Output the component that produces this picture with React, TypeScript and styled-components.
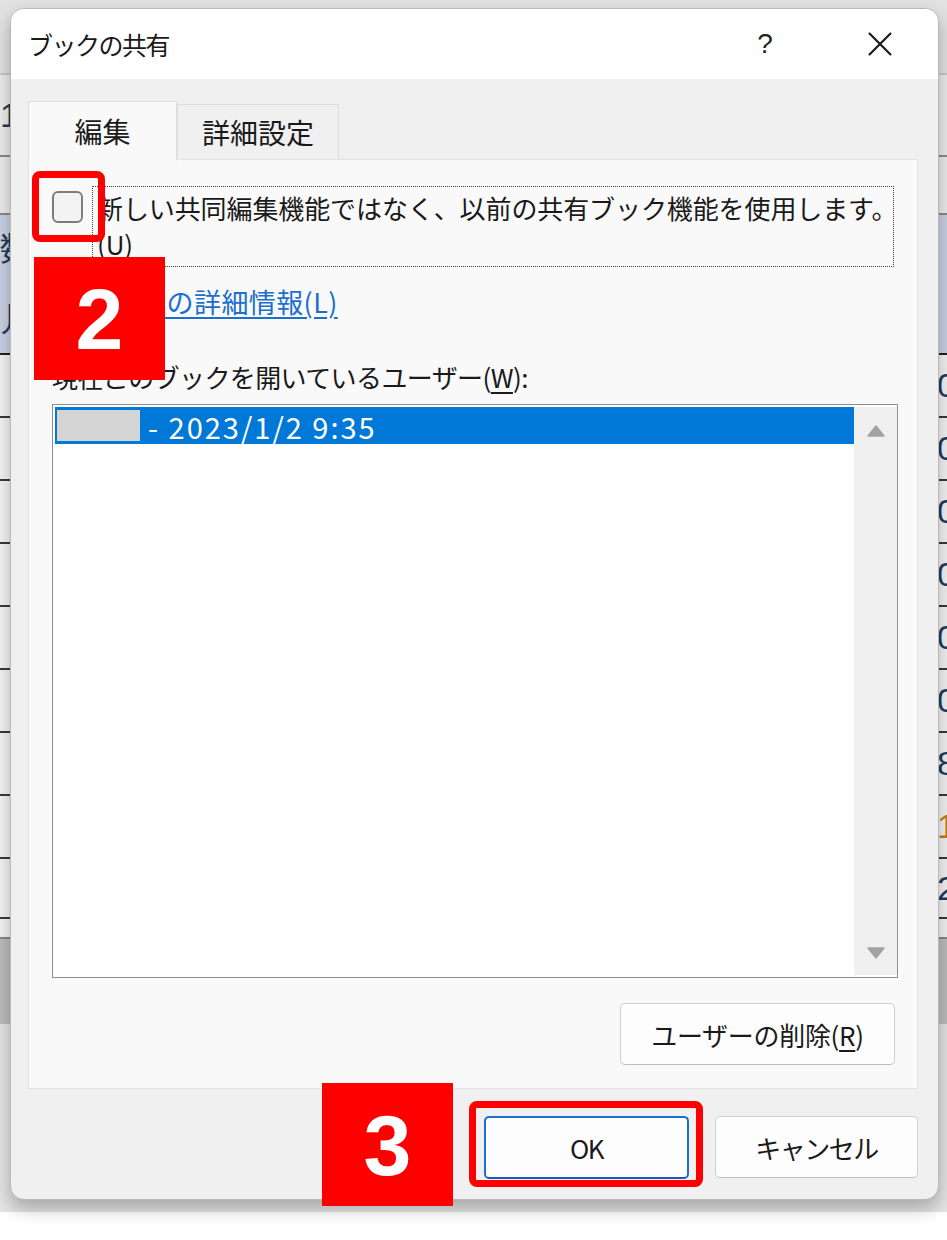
import React from "react";
import styled, { createGlobalStyle } from "styled-components";

const GlobalStyle = createGlobalStyle`
  html, body { margin: 0; padding: 0; background: #ffffff; }
  body { font-family: "Noto Sans CJK JP", "Noto Sans", sans-serif; color: #1a1a1a; }
`;

const UI = `"Noto Sans CJK JP", "Noto Sans", sans-serif`;

const Page = styled.div`
  position: relative;
  width: 947px;
  height: 1240px;
  overflow: hidden;
  background: #ffffff;
`;

/* ---------- spreadsheet behind the dialog ---------- */
const Sheet = styled.div`
  display: flex;
  flex-direction: column;
  width: 947px;
  height: 1212px;
  background: #e4e4e4;
`;

const SheetRow = styled.div<{ $h: number; $bg?: string; $line?: string }>`
  display: flex;
  justify-content: space-between;
  align-items: center;
  height: ${(p) => p.$h}px;
  flex: none;
  box-sizing: border-box;
  background: ${(p) => p.$bg || "#f4f4f4"};
  border-bottom: 2px solid ${(p) => p.$line || "#3a3a3a"};
`;

const EdgeCell = styled.div<{ $c?: string }>`
  width: 10px;
  overflow: hidden;
  white-space: nowrap;
  font-family: "Liberation Sans", sans-serif;
  font-size: 34px;
  color: ${(p) => p.$c || "#1f3a5a"};
`;

const RightCell = styled(EdgeCell)`
  text-align: left;
`;

/* ---------- dialog ---------- */
const Dialog = styled.div`
  position: absolute;
  left: 10px;
  top: 8px;
  width: 929px;
  height: 1192px;
  display: flex;
  flex-direction: column;
  background: #f0f0f0;
  border: 1px solid #b9b9b9;
  border-radius: 14px;
  box-sizing: border-box;
  overflow: hidden;
  box-shadow: 0 8px 18px rgba(0, 0, 0, 0.28);
`;

const TitleBar = styled.div`
  display: flex;
  align-items: center;
  height: 70px;
  flex: none;
  padding-left: 17px;
  background: #ffffff;
`;

const Title = styled.div`
  flex: 1;
  font-family: ${UI};
  font-size: 25px;
  letter-spacing: -1.5px;
  color: #1a1a1a;
`;

const Help = styled.div`
  width: 30px;
  margin-right: 86px;
  font-family: "Liberation Sans", sans-serif;
  font-size: 28px;
  color: #222;
  text-align: center;
`;

const CloseBtn = styled.div`
  width: 28px;
  height: 28px;
  margin-right: 44px;
  display: flex;
  align-items: center;
  justify-content: center;
`;

const Body = styled.div`
  flex: 1;
  display: flex;
  flex-direction: column;
  padding: 22px 20px 0 17px;
`;

const TabRow = styled.div`
  display: flex;
  align-items: flex-end;
  height: 58px;
`;

const Tab = styled.div<{ $active?: boolean }>`
  position: relative;
  z-index: ${(p) => (p.$active ? 1 : 0)};
  box-sizing: border-box;
  display: flex;
  align-items: center;
  justify-content: center;
  width: ${(p) => (p.$active ? 149 : 162)}px;
  height: ${(p) => (p.$active ? 60 : 55)}px;
  margin-bottom: ${(p) => (p.$active ? -2 : 0)}px;
  padding-bottom: ${(p) => (p.$active ? 1 : 0)}px;
  background: ${(p) => (p.$active ? "#f9f9f9" : "#f0f0f0")};
  border: 1px solid #dedede;
  border-bottom: none;
  font-family: ${UI};
  font-size: 28px;
  color: #1a1a1a;
`;

const Panel = styled.div`
  box-sizing: border-box;
  display: flex;
  flex-direction: column;
  height: 930px;
  padding: 0 19px 0 23px;
  background: #f9f9f9;
  border: 1px solid #e2e2e2;
`;

const CheckRow = styled.div`
  display: flex;
  align-items: flex-start;
  margin-top: 26px;
  gap: 9px;
`;

const CheckBox = styled.div`
  box-sizing: border-box;
  width: 31px;
  height: 32px;
  margin-top: 5px;
  flex: none;
  border: 2px solid #7d7d7d;
  border-radius: 6px;
  background: #f3f3f3;
`;

const FocusRect = styled.div`
  flex: 1;
  min-width: 0;
  margin-right: 4px;
  box-sizing: border-box;
  height: 81px;
  padding: 3px 4px 4px 4px;
  border: 1px dotted #444;
  font-family: ${UI};
  font-size: 26px;
  line-height: 36px;
  letter-spacing: -0.1px;
  color: #1a1a1a;
`;

const Line = styled.div`
  white-space: nowrap;
`;

const Link = styled.a`
  align-self: flex-start;
  margin-top: 17px;
  margin-left: 5px;
  font-family: ${UI};
  font-size: 27px;
  line-height: 36px;
  letter-spacing: 0.4px;
  color: #1a6fcf;
  text-decoration: underline;
  text-underline-offset: 4px;
`;

const Label = styled.div`
  margin-top: 39px;
  font-family: ${UI};
  font-size: 26px;
  line-height: 36px;
  letter-spacing: -0.6px;
  color: #1a1a1a;
`;

const Under = styled.span`
  text-decoration: underline;
  text-underline-offset: 4px;
`;

const ListBox = styled.div`
  box-sizing: border-box;
  display: flex;
  height: 574px;
  margin-top: 9px;
  padding: 2px 0 2px 2px;
  background: #ffffff;
  border: 1px solid #8e8e8e;
`;

const ListItems = styled.div`
  flex: 1;
  display: flex;
  flex-direction: column;
`;

const ListItem = styled.div<{ $selected?: boolean }>`
  display: flex;
  align-items: center;
  gap: 8px;
  height: 37px;
  padding-left: 2px;
  background: ${(p) => (p.$selected ? "#0078d7" : "transparent")};
  color: ${(p) => (p.$selected ? "#ffffff" : "#1a1a1a")};
  font-family: ${UI};
  font-size: 29px;
  letter-spacing: 2px;
`;

const Redacted = styled.div`
  width: 83px;
  height: 31px;
  background: #d4d4d4;
`;

const ScrollBar = styled.div`
  width: 43px;
  flex: none;
  display: flex;
  flex-direction: column;
  justify-content: space-between;
  align-items: center;
  padding: 18px 0 16px;
  box-sizing: border-box;
  background: #f0f0f0;
`;

const ButtonRow = styled.div<{ $gap?: number }>`
  display: flex;
  justify-content: flex-end;
  gap: ${(p) => p.$gap || 0}px;
`;

const Button = styled.div<{ $w: number; $primary?: boolean; $ls?: number }>`
  box-sizing: border-box;
  width: ${(p) => p.$w}px;
  height: ${(p) => (p.$primary ? 63 : 62)}px;
  display: flex;
  align-items: center;
  justify-content: center;
  background: #fdfdfd;
  border: ${(p) => (p.$primary ? "2px solid #1a6fcf" : "1px solid #cfcfcf")};
  border-bottom-color: ${(p) => (p.$primary ? "#0f5fb8" : "#bdbdbd")};
  border-radius: 5px;
  font-family: ${UI};
  font-size: 26px;
  letter-spacing: ${(p) => (p.$ls ?? -1.5)}px;
  color: #1a1a1a;
`;

const RemoveRow = styled(ButtonRow)`
  margin-top: 25px;
  margin-right: 3px;
`;

const Footer = styled(ButtonRow)`
  padding-top: 27px;
`;

/* ---------- annotations over the screenshot ---------- */
const Highlight = styled.div<{ $x: number; $y: number; $w: number; $h: number }>`
  position: absolute;
  left: ${(p) => p.$x}px;
  top: ${(p) => p.$y}px;
  width: ${(p) => p.$w}px;
  height: ${(p) => p.$h}px;
  box-sizing: border-box;
  border: 7px solid #ff0000;
  border-radius: 8px;
`;

const Badge = styled.div<{ $x: number; $y: number }>`
  position: absolute;
  left: ${(p) => p.$x}px;
  top: ${(p) => p.$y}px;
  width: 131px;
  height: 123px;
  display: flex;
  align-items: center;
  justify-content: center;
  background: #ff0000;
  color: #ffffff;
  font-family: "Liberation Sans", Arial, sans-serif;
  font-weight: bold;
  font-size: 86px;
  line-height: 1;
`;

const rows: { h: number; bg?: string; line?: string; l?: string; r?: string; rc?: string }[] = [
  { h: 75, bg: "#e2e2e2", line: "#c8c8c8" },
  { h: 82, bg: "#ececec", line: "#8a8a8a", l: "1" },
  { h: 58, bg: "#ececec", line: "#8a8a8a" },
  { h: 70, bg: "#c9d2e4", line: "#c9d2e4", l: "数" },
  { h: 70, bg: "#c9d2e4", line: "#222", l: "月" },
  { h: 63, r: "0" },
  { h: 63, r: "0" },
  { h: 63, r: "0" },
  { h: 63, r: "0" },
  { h: 63, r: "0" },
  { h: 63, r: "0" },
  { h: 63, r: "8" },
  { h: 63, r: "1", rc: "#c07a20" },
  { h: 60, r: "2" },
  { h: 20, bg: "#f4f4f4", line: "#888" },
  { h: 85, bg: "#bdbdbd", line: "#bdbdbd" },
];

export default function App() {
  return (
    <Page>
      <GlobalStyle />
      <Sheet>
        {rows.map((r, i) => (
          <SheetRow key={i} $h={r.h} $bg={r.bg} $line={r.line}>
            <EdgeCell>{r.l || ""}</EdgeCell>
            <RightCell $c={r.rc}>{r.r || ""}</RightCell>
          </SheetRow>
        ))}
      </Sheet>

      <Dialog>
        <TitleBar>
          <Title>ブックの共有</Title>
          <Help>?</Help>
          <CloseBtn>
            <svg width="26" height="26" viewBox="0 0 26 26">
              <path d="M2 2 L24 24 M24 2 L2 24" stroke="#1a1a1a" strokeWidth="2.2" fill="none" />
            </svg>
          </CloseBtn>
        </TitleBar>
        <Body>
          <TabRow>
            <Tab $active>編集</Tab>
            <Tab>詳細設定</Tab>
          </TabRow>
          <Panel>
            <CheckRow>
              <CheckBox />
              <FocusRect>
                <Line>新しい共同編集機能ではなく、以前の共有ブック機能を使用します。</Line>
                <Line>(U)</Line>
              </FocusRect>
            </CheckRow>
            <Link>共同編集の詳細情報(L)</Link>
            <Label>
              現在このブックを開いているユーザー(<Under>W</Under>):
            </Label>
            <ListBox>
              <ListItems>
                <ListItem $selected>
                  <Redacted />
                  <span>- 2023/1/2 9:35</span>
                </ListItem>
              </ListItems>
              <ScrollBar>
                <svg width="18" height="12" viewBox="0 0 18 12">
                  <path d="M9 1 L17 11 L1 11 Z" fill="#a3a3a3" stroke="#a3a3a3" strokeLinejoin="round" strokeWidth="1.5" />
                </svg>
                <svg width="18" height="12" viewBox="0 0 18 12">
                  <path d="M1 1 L17 1 L9 11 Z" fill="#a3a3a3" stroke="#a3a3a3" strokeLinejoin="round" strokeWidth="1.5" />
                </svg>
              </ScrollBar>
            </ListBox>
            <RemoveRow>
              <Button $w={275} $ls={-0.3}>
                ユーザーの削除(<Under>R</Under>)
              </Button>
            </RemoveRow>
          </Panel>
          <Footer $gap={26}>
            <Button $w={205} $primary>
              OK
            </Button>
            <Button $w={203}>キャンセル</Button>
          </Footer>
        </Body>
      </Dialog>

      <Highlight $x={32} $y={171} $w={73} $h={71} />
      <Badge $x={34} $y={257}>2</Badge>
      <Badge $x={322} $y={1083}>3</Badge>
      <Highlight $x={469} $y={1101} $w={234} $h={86} />
    </Page>
  );
}
